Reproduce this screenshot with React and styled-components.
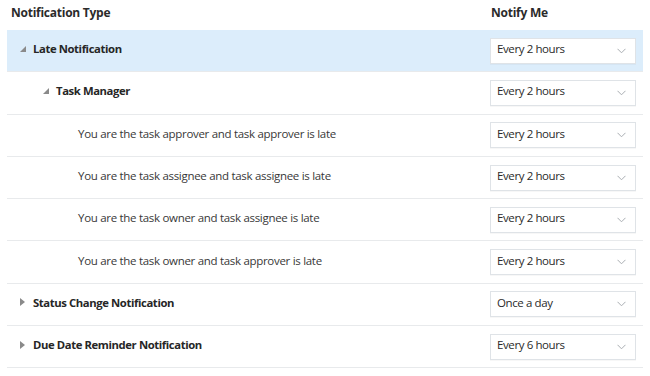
import React from "react";
import styled, { createGlobalStyle } from "styled-components";

const GlobalStyle = createGlobalStyle`
  html, body {
    margin: 0;
    padding: 0;
    background: #fff;
  }
  body {
    font-family: "Open Sans", "Noto Sans", sans-serif;
  }
`;

const Table = styled.div`
  width: 636px;
  margin-left: 7px;
`;

const HeaderRow = styled.div`
  display: grid;
  grid-template-columns: 483px 153px;
  height: 30px;
  align-items: center;
`;

const HeaderCell = styled.div`
  font-size: 12px;
  font-weight: 700;
  color: #2b2b2b;
  padding-left: ${(p) => p.pad || 0}px;
  letter-spacing: -0.25px;
  margin-top: -5px;
`;

const Row = styled.div`
  display: grid;
  grid-template-columns: 483px 153px;
  height: 42.3px;
  box-sizing: border-box;
  align-items: center;
  border-bottom: 1px solid #e8eaec;
  background: ${(p) => (p.selected ? "#dcedfb" : "#fff")};
`;

const NameCell = styled.div`
  display: flex;
  align-items: center;
  padding-left: ${(p) => p.indent}px;
  font-size: ${(p) => (p.bold ? "11.3px" : "11.5px")};
  font-weight: ${(p) => (p.bold ? 700 : 400)};
  color: ${(p) => (p.bold ? "#262626" : "#383838")};
  letter-spacing: ${(p) => (p.bold ? "-0.4px" : "-0.3px")};
  margin-top: -4px;
`;

const Toggle = styled.span`
  display: inline-flex;
  width: 13px;
  align-items: center;
`;

const Select = styled.div`
  width: 146px;
  height: 26px;
  box-sizing: border-box;
  display: flex;
  align-items: center;
  justify-content: space-between;
  padding: 0 9px 0 6px;
  background: #fff;
  border: 1px solid #dfe3e7;
  box-shadow: 0 1px 0 rgba(0, 0, 0, 0.03);
  font-size: 11.5px;
  color: #2a2a2a;
  letter-spacing: -0.4px;
`;

const SelectText = styled.span`
  margin-top: -4px;
`;

const Expanded = () => (
  <svg width="6" height="6" viewBox="0 0 6 6">
    <polygon points="6,0 6,6 0,6" fill="#8a8a8a" />
  </svg>
);

const Collapsed = () => (
  <svg width="5" height="8" viewBox="0 0 5 8">
    <polygon points="0,0 5,4 0,8" fill="#8a8a8a" />
  </svg>
);

const Chevron = () => (
  <svg width="9" height="6" viewBox="0 0 9 6">
    <polyline points="0.5,0.8 4.5,4.8 8.5,0.8" fill="none" stroke="#a9adb2" strokeWidth="1" />
  </svg>
);

const rows = [
  { name: "Late Notification", bold: true, indent: 13, toggle: "open", value: "Every 2 hours", selected: true },
  { name: "Task Manager", bold: true, indent: 36, toggle: "open", value: "Every 2 hours" },
  { name: "You are the task approver and task approver is late", indent: 71, value: "Every 2 hours" },
  { name: "You are the task assignee and task assignee is late", indent: 71, value: "Every 2 hours" },
  { name: "You are the task owner and task assignee is late", indent: 71, value: "Every 2 hours" },
  { name: "You are the task owner and task approver is late", indent: 71, value: "Every 2 hours" },
  { name: "Status Change Notification", bold: true, indent: 13, toggle: "closed", value: "Once a day" },
  { name: "Due Date Reminder Notification", bold: true, indent: 13, toggle: "closed", value: "Every 6 hours" },
];

const App = () => (
  <>
    <GlobalStyle />
    <Table>
      <HeaderRow>
        <HeaderCell pad={4}>Notification Type</HeaderCell>
        <HeaderCell pad={1}>Notify Me</HeaderCell>
      </HeaderRow>
      {rows.map((r, i) => (
        <Row key={i} selected={r.selected}>
          <NameCell indent={r.indent} bold={r.bold}>
            {r.toggle && (
              <Toggle>{r.toggle === "open" ? <Expanded /> : <Collapsed />}</Toggle>
            )}
            {r.name}
          </NameCell>
          <Select>
            <SelectText>{r.value}</SelectText>
            <Chevron />
          </Select>
        </Row>
      ))}
    </Table>
  </>
);

export default App;
